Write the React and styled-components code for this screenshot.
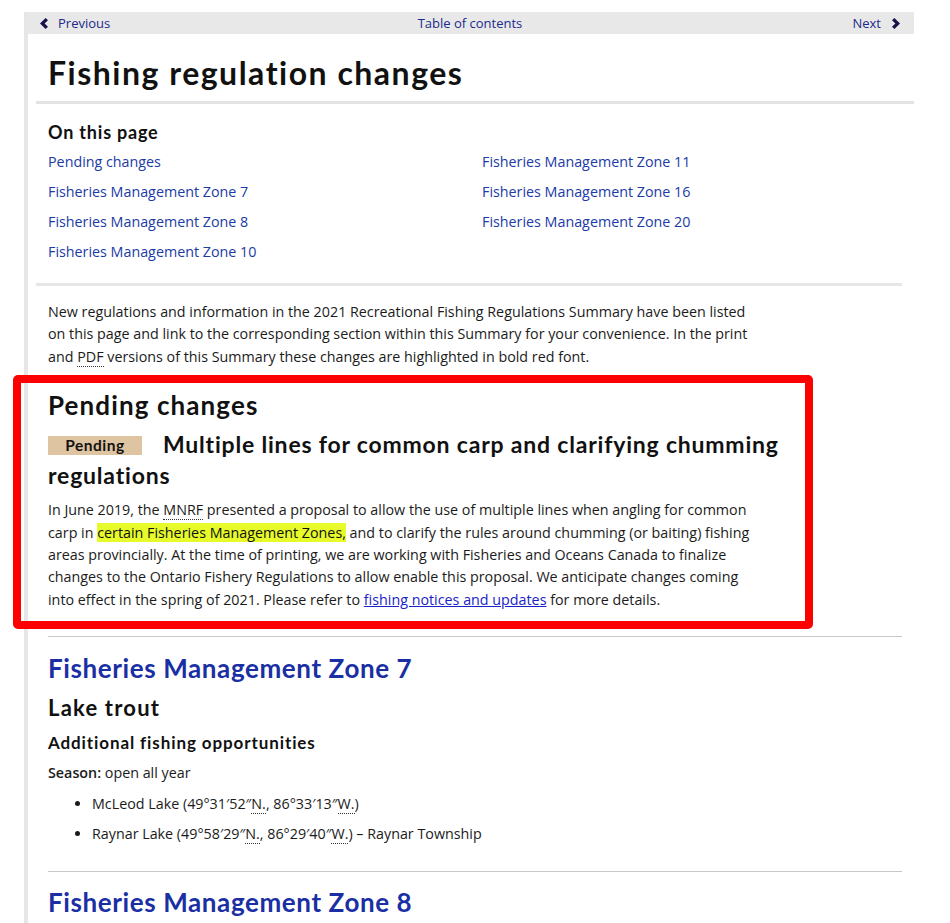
import React from "react";
import styled, { createGlobalStyle } from "styled-components";

const Global = createGlobalStyle`
  html, body { margin: 0; padding: 0; background: #fff; }
  body { font-family: "Open Sans", "Liberation Sans", sans-serif; color: #1b1b1b; }
  * { box-sizing: border-box; }
`;

const HEAD = `"Lato", "Open Sans", "Liberation Sans", sans-serif`;

const Page = styled.div`
  padding-top: 12px;
  padding-left: 24px;
  width: 914px;
`;

const Container = styled.div`
  border-left: 4px solid #e6e6e6;
  min-height: 911px;
`;

const NavBar = styled.nav`
  height: 22px;
  background: #e8e8e8;
  display: flex;
  align-items: center;
  justify-content: space-between;
  padding: 0 14px 0 12px;
  font-size: 13px;
  color: #1c2a8c;
`;

const NavLink = styled.a`
  display: flex;
  align-items: center;
  gap: ${(p) => p.$gap || 10}px;
  color: inherit;
  text-decoration: none;
  flex: ${(p) => (p.$center ? "0 0 auto" : "1 1 0")};
  justify-content: ${(p) => p.$align || "flex-start"};
`;

const Chevron = styled.svg`
  width: 8px;
  height: 11px;
  fill: #15134a;
`;

const Main = styled.main`
  padding: 0 12px 0 20px;
`;

const Title = styled.h1`
  font-family: ${HEAD};
  font-weight: 700;
  font-size: 32px;
  letter-spacing: 1.5px;
  line-height: 40px;
  margin: 19px 0 8px;
  color: #111;
`;

const Rule = styled.hr`
  border: 0;
  height: ${(p) => p.$h || 1}px;
  background: ${(p) => p.$c || "#cfcfcf"};
  margin: ${(p) => p.$m || "0"};
`;

const OnPage = styled.h2`
  font-family: ${HEAD};
  font-weight: 700;
  font-size: 18px;
  letter-spacing: 0.8px;
  line-height: 24px;
  margin: 16px 0 3px;
  color: #111;
`;

const LinkGrid = styled.ul`
  list-style: none;
  margin: 0;
  padding: 0;
  display: grid;
  grid-template-columns: 434px 1fr;
  grid-auto-flow: column;
  grid-template-rows: repeat(4, 30px);
`;

const TocItem = styled.li`
  font-size: 14.3px;
  line-height: 30px;
  a { color: #1b3ba6; text-decoration: none; }
`;

const Para = styled.p`
  font-size: 14.3px;
  line-height: 22.4px;
  margin: ${(p) => p.$m || "0"};
  max-width: 712px;
  color: #1b1b1b;
`;

const Abbr = styled.abbr`
  text-decoration: none;
  border-bottom: 1px dotted #333;
`;

const PendingSection = styled.section`
  position: relative;
  margin-top: 7px;
  padding: 14px 0 18px;
`;

const Frame = styled.div`
  position: absolute;
  top: 0;
  bottom: 0;
  left: -35px;
  width: 800px;
  border: 8px solid #fe0000;
  border-radius: 5px;
  pointer-events: none;
`;

const H2 = styled.h2`
  font-family: ${HEAD};
  font-weight: 700;
  font-size: 26px;
  letter-spacing: ${(p) => p.$ls || 0.8}px;
  line-height: 32px;
  margin: ${(p) => p.$m || "0"};
  color: ${(p) => p.$c || "#111"};
`;

const H3 = styled.h3`
  font-family: ${HEAD};
  font-weight: 700;
  font-size: 23px;
  letter-spacing: 0.8px;
  line-height: 31px;
  margin: 8px 0 0;
  color: #111;
`;

const Badge = styled.span`
  display: inline-block;
  width: 94px;
  text-align: center;
  background: #dfc4a1;
  font-size: 15.5px;
  letter-spacing: 0.5px;
  line-height: 19px;
  margin-right: 21px;
  vertical-align: 2px;
  color: #111;
`;

const Mark = styled.mark`
  background: #e8fb2a;
  color: #111;
`;

const BodyLink = styled.a`
  color: #1a22c8;
  text-decoration: underline;
`;

const H4 = styled.h3`
  font-family: ${HEAD};
  font-weight: 700;
  font-size: ${(p) => p.$size}px;
  letter-spacing: ${(p) => p.$ls}px;
  line-height: ${(p) => p.$lh}px;
  margin: ${(p) => p.$m};
  color: #111;
`;

const Strong = styled.strong`
  font-weight: 600;
`;

const Bullets = styled.ul`
  margin: 8px 0 0;
  padding-left: 44px;
  display: flex;
  flex-direction: column;
  gap: 8px;
`;

const Bullet = styled.li`
  font-size: 14.3px;
  line-height: 22px;
`;

const ChevLeft = () => (
  <Chevron viewBox="0 0 8 11">
    <path d="M5.6 0 L8 2.2 L4.6 5.5 L8 8.8 L5.6 11 L0 5.5 Z" />
  </Chevron>
);
const ChevRight = () => (
  <Chevron viewBox="0 0 8 11">
    <path d="M2.4 0 L0 2.2 L3.4 5.5 L0 8.8 L2.4 11 L8 5.5 Z" />
  </Chevron>
);

const toc = [
  "Pending changes",
  "Fisheries Management Zone 7",
  "Fisheries Management Zone 8",
  "Fisheries Management Zone 10",
  "Fisheries Management Zone 11",
  "Fisheries Management Zone 16",
  "Fisheries Management Zone 20",
];

export default function App() {
  return (
    <>
      <Global />
      <Page>
        <Container>
          <NavBar>
            <NavLink href="#">
              <ChevLeft />
              Previous
            </NavLink>
            <NavLink href="#" $center>
              Table of contents
            </NavLink>
            <NavLink href="#" $align="flex-end" $gap={11}>
              Next
              <ChevRight />
            </NavLink>
          </NavBar>
          <Main>
            <Title>Fishing regulation changes</Title>
            <Rule $h={3} $c="#e3e3e3" $m="0 -12px 0 -12px" />
            <OnPage>On this page</OnPage>
            <LinkGrid>
              {toc.map((t) => (
                <TocItem key={t}>
                  <a href="#">{t}</a>
                </TocItem>
              ))}
            </LinkGrid>
            <Rule $h={3} $c="#e6e6e6" $m="16px 0 0 -12px" />
            <Para $m="15px 0 0">
              New regulations and information in the 2021 Recreational Fishing Regulations Summary have been listed
              on this page and link to the corresponding section within this Summary for your convenience. In the print
              and <Abbr title="Portable Document Format">PDF</Abbr> versions of this Summary these changes are
              highlighted in bold red font.
            </Para>
            <PendingSection>
              <Frame />
              <H2 $ls={1.1}>Pending changes</H2>
              <H3>
                <Badge>Pending</Badge>Multiple lines for common carp and clarifying chumming regulations
              </H3>
              <Para $m="8px 0 0">
                In June 2019, the <Abbr title="Ministry of Natural Resources and Forestry">MNRF</Abbr> presented a
                proposal to allow the use of multiple lines when angling for common carp in{" "}
                <Mark>certain Fisheries Management Zones,</Mark> and to clarify the rules around chumming (or baiting)
                fishing areas provincially. At the time of printing, we are working with Fisheries and Oceans Canada to
                finalize changes to the Ontario Fishery Regulations to allow enable this proposal. We anticipate changes
                coming into effect in the spring of 2021. Please refer to{" "}
                <BodyLink href="#">fishing notices and updates</BodyLink> for more details.
              </Para>
            </PendingSection>
            <Rule $h={1} $c="#c8c8c8" $m="7px 0 0" />
            <H2 $m="15px 0 0" $c="#1a2fa3" $ls={0.6}>Fisheries Management Zone 7</H2>
            <H4 $size={22} $lh={28} $ls={1.2} $m="10px 0 0">Lake trout</H4>
            <H4 $size={17} $lh={24} $ls={0.9} $m="9px 0 0">Additional fishing opportunities</H4>
            <Para $m="7px 0 0">
              <Strong>Season:</Strong> open all year
            </Para>
            <Bullets>
              <Bullet>
                McLeod Lake (49°31′52″<Abbr title="North">N.</Abbr>, 86°33′13″<Abbr title="West">W.</Abbr>)
              </Bullet>
              <Bullet>
                Raynar Lake (49°58′29″<Abbr title="North">N.</Abbr>, 86°29′40″<Abbr title="West">W.</Abbr>) – Raynar
                Township
              </Bullet>
            </Bullets>
            <Rule $h={1} $c="#c8c8c8" $m="26px 0 0" />
            <H2 $m="14px 0 0" $c="#1a2fa3" $ls={0.6}>Fisheries Management Zone 8</H2>
          </Main>
        </Container>
      </Page>
    </>
  );
}
